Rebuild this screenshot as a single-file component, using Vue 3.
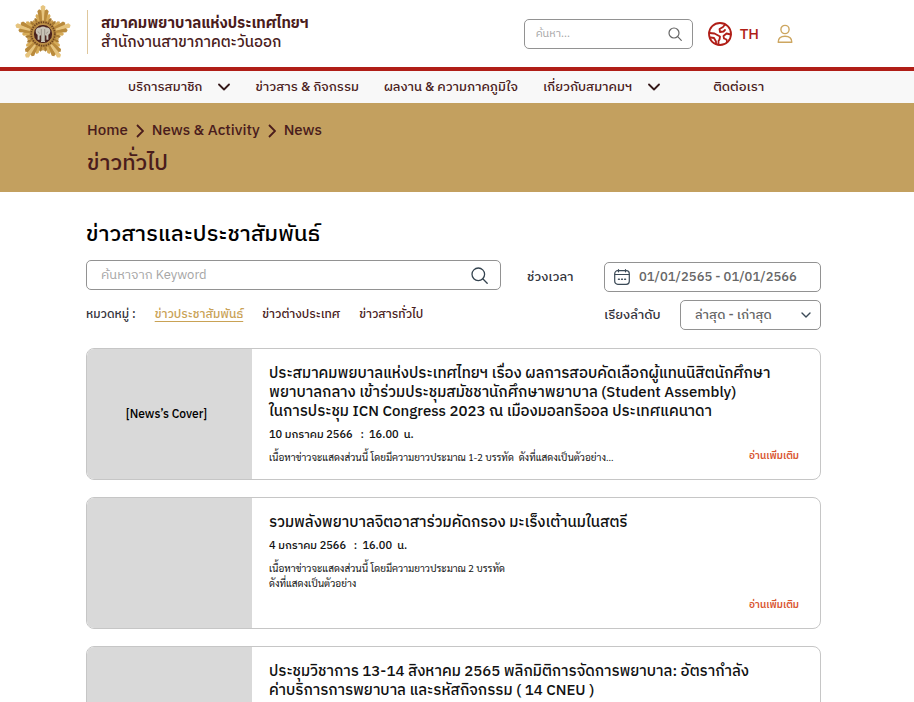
<script setup>
import { ref } from 'vue'

const keyword = ref('')
const siteSearch = ref('')
const dateRange = ref('01/01/2565 - 01/01/2566')
const sort = ref('desc')

const menu = [
  { label: 'บริการสมาชิก', more: true, area: 'member' },
  { label: 'ข่าวสาร & กิจกรรม', area: 'news' },
  { label: 'ผลงาน & ความภาคภูมิใจ', area: 'work' },
  { label: 'เกี่ยวกับสมาคมฯ', more: true, area: 'about' },
  { label: 'ติดต่อเรา', area: 'contact' },
]

const categories = [
  { label: 'ข่าวประชาสัมพันธ์', active: true },
  { label: 'ข่าวต่างประเทศ' },
  { label: 'ข่าวสารทั่วไป' },
]

const news = [
  {
    cover: '[News’s Cover]',
    title: [
      'ประสมาคมพยบาลแห่งประเทศไทยฯ เรื่อง ผลการสอบคัดเลือกผู้แทนนิสิตนักศึกษา',
      'พยาบาลกลาง เข้าร่วมประชุมสมัชชานักศึกษาพยาบาล (Student Assembly)',
      'ในการประชุม ICN Congress 2023 ณ เมืองมอลทริออล ประเทศแคนาดา',
    ],
    date: '10 มกราคม 2566   :  16.00  น.',
    body: ['เนื้อหาข่าวจะแสดงส่วนนี้ โดยมีความยาวประมาณ 1-2 บรรทัด  ดังที่แสดงเป็นตัวอย่าง...'],
    link: '#',
  },
  {
    title: ['รวมพลังพยาบาลจิตอาสาร่วมคัดกรอง มะเร็งเต้านมในสตรี'],
    date: '4 มกราคม 2566   :  16.00  น.',
    body: ['เนื้อหาข่าวจะแสดงส่วนนี้ โดยมีความยาวประมาณ 2 บรรทัด', 'ดังที่แสดงเป็นตัวอย่าง'],
    link: '#',
  },
  {
    title: [
      'ประชุมวิชาการ 13-14 สิงหาคม 2565 พลิกมิติการจัดการพยาบาล: อัตรากำลัง',
      'ค่าบริการการพยาบาล และรหัสกิจกรรม ( 14 CNEU )',
    ],
  },
]

// Rays of the star emblem: long at the five tips, short in the valleys.
const rayLengths = [29, 25, 21, 18, 17, 18, 21, 25]
const rayColors = ['#e6c47e', '#b98a3c', '#d6ab58', '#a87a30', '#c89a4c', '#a87a30', '#d6ab58', '#b98a3c']
const rays = Array.from({ length: 40 }, (_, i) => {
  const a = (i * 9 * Math.PI) / 180
  const w = (5 * Math.PI) / 180
  const r = rayLengths[i % 8]
  const p = (rad, ang) => `${(30 + rad * Math.sin(ang)).toFixed(2)},${(30 - rad * Math.cos(ang)).toFixed(2)}`
  return {
    points: `30,30 ${p(r - 1.5, a - w)} ${p(r, a)} ${p(r - 1.5, a + w)}`,
    fill: rayColors[i % 8],
  }
})
</script>

<template>
  <div class="page">
    <header class="top">
      <a class="brand" href="#">
        <svg class="emblem" viewBox="0 0 60 60" aria-hidden="true">
          <polygon points="30,2 38,19 56.600,21.300 43,34.300 46.500,52.600 30,44 13.500,52.600 17,34.300 3.400,21.300 22,19" fill="#b98a3c" />
          <polygon v-for="(ray, i) in rays" :key="i" :points="ray.points" :fill="ray.fill" />
          <circle cx="30" cy="30" r="13.500" fill="#b98a40" />
          <circle cx="30" cy="30" r="11.800" fill="none" stroke="#6f4620" stroke-width="1.800" stroke-dasharray="1.400 1" />
          <circle cx="30" cy="30" r="9.600" fill="#4a211c" stroke="#c9a055" stroke-width=".8" />
          <path d="M27 23.500c1.500-1.300 4.500-1.300 6 0 2.500-.4 4.300 1.300 4.300 3.600 0 2-.8 3.300-1.900 3.700v5h-2v-4l-1.400-.5V38h-4v-6.700l-1.400.5v4h-2v-5c-1.100-.4-1.900-1.700-1.900-3.700 0-2.300 1.800-4 4.300-3.600z" fill="#c8c2b6" />
          <path d="M28.300 25v12M31.700 25v12M25 27.500l1.500 2M35 27.500l-1.500 2" stroke="#7d7269" stroke-width=".6" fill="none" />
        </svg>
        <span class="brand-text">
          <strong>สมาคมพยาบาลแห่งประเทศไทยฯ</strong>
          <span>สำนักงานสาขาภาคตะวันออก</span>
        </span>
      </a>
      <div class="tools">
        <form class="box site-search" role="search" @submit.prevent>
          <input v-model="siteSearch" type="text" placeholder="ค้นหา..." aria-label="ค้นหา" />
          <button type="submit" aria-label="ค้นหา">
            <svg width="14" height="14" viewBox="0 0 14 14" fill="none" stroke="#666" stroke-width="1.200" stroke-linecap="round">
              <circle cx="6" cy="6" r="5" /><path d="M9.700 9.700L13.300 13.300" />
            </svg>
          </button>
        </form>
        <button class="lang" type="button">
          <svg width="24" height="24" viewBox="0 0 24 24" fill="none" stroke="#b01e17" stroke-width="1.800" stroke-linejoin="round" stroke-linecap="round" aria-hidden="true">
            <circle cx="12" cy="12" r="11" />
            <path d="M1.500 11L6.500 11.500 12 14.500 11.500 17.500 10.500 19v3.500M2.500 15.500L6 16l2 3.500v2.500" />
            <path d="M17 2.500L15 5l-3.500 2 .5 3 3.500-.5 1.500-1.500M22.800 12.500L18.500 11.500 15.500 14l.5 2.500 2.500 1 .5 2.500" />
          </svg>
          <span>TH</span>
        </button>
        <button class="user" type="button" aria-label="บัญชีผู้ใช้">
          <svg width="16" height="20" viewBox="0 0 16 20" fill="none" stroke="#cda660" stroke-width="1.400" stroke-linejoin="round">
            <circle cx="8" cy="5.500" r="4.100" />
            <path d="M1.200 18.300c0-4 2.700-6 6.800-6s6.800 2 6.800 6z" />
          </svg>
        </button>
      </div>
    </header>

    <nav class="menu">
      <a v-for="item in menu" :key="item.label" href="#" :class="item.area">
        <span>{{ item.label }}</span>
        <svg v-if="item.more" width="12" height="8" viewBox="0 0 12 8" fill="none" stroke="#35191a" stroke-width="1.800" stroke-linecap="round" stroke-linejoin="round" aria-hidden="true">
          <path d="M1 1.500l5 5 5-5" />
        </svg>
      </a>
    </nav>

    <section class="band">
      <div class="crumbs">
        <a href="#">Home</a>
        <svg width="8" height="14" viewBox="0 0 8 14" aria-hidden="true"><path d="M1 1l6 6-6 6" /></svg>
        <a href="#">News &amp; Activity</a>
        <svg width="8" height="14" viewBox="0 0 8 14" aria-hidden="true"><path d="M1 1l6 6-6 6" /></svg>
        <a href="#">News</a>
      </div>
      <h1>ข่าวทั่วไป</h1>
    </section>

    <main>
      <h2>ข่าวสารและประชาสัมพันธ์</h2>
      <div class="filters">
        <div class="left">
          <form class="box keyword" @submit.prevent>
            <input v-model="keyword" type="text" placeholder="ค้นหาจาก Keyword" aria-label="ค้นหาจาก Keyword" />
            <button type="submit" aria-label="ค้นหา">
              <svg width="17" height="17" viewBox="0 0 17 17" fill="none" stroke="#34434f" stroke-width="1.300" stroke-linecap="round">
                <circle cx="7.300" cy="7.300" r="6.300" /><path d="M12 12l4.200 4.200" />
              </svg>
            </button>
          </form>
          <div class="cats">
            <span>หมวดหมู่ :</span>
            <a v-for="c in categories" :key="c.label" href="#" :class="{ active: c.active }">{{ c.label }}</a>
          </div>
        </div>
        <div class="right">
          <div class="field">
            <label for="range">ช่วงเวลา</label>
            <div class="box range">
              <svg width="16" height="16" viewBox="0 0 16 16" fill="none" stroke="#3b4a57" stroke-width="1.200" stroke-linecap="round" aria-hidden="true">
                <rect x=".7" y="1.700" width="14.600" height="13.600" rx="3" />
                <path d="M1 5.500h14M4.500.6v2.200M11.500.6v2.200" />
                <path d="M4.500 10.300h.8M7.600 10.300h.8M10.700 10.300h.8" stroke-width="1.500" />
              </svg>
              <input id="range" v-model="dateRange" type="text" />
            </div>
          </div>
          <div class="field sort">
            <label for="sort">เรียงลำดับ</label>
            <div class="box select">
              <select id="sort" v-model="sort">
                <option value="desc">ล่าสุด - เก่าสุด</option>
                <option value="asc">เก่าสุด - ล่าสุด</option>
              </select>
              <svg width="10" height="6" viewBox="0 0 10 6" fill="none" stroke="#3b4a57" stroke-width="1.400" stroke-linecap="round" stroke-linejoin="round" aria-hidden="true">
                <path d="M1 1l4 4 4-4" />
              </svg>
            </div>
          </div>
        </div>
      </div>

      <article v-for="n in news" :key="n.title[0]" class="card">
        <div class="cover">{{ n.cover }}</div>
        <div class="content">
          <h3><span v-for="line in n.title" :key="line">{{ line }}</span></h3>
          <time v-if="n.date">{{ n.date }}</time>
          <p v-if="n.body"><span v-for="line in n.body" :key="line">{{ line }}</span></p>
          <a v-if="n.link" class="more" :href="n.link">อ่านเพิ่มเติม</a>
        </div>
      </article>
    </main>
  </div>
</template>

<style>
body {
  background: #fff;
  overflow-x: hidden;
}
html {
  scrollbar-width: none;
}
</style>

<style scoped>
.page {
  font-family: 'IBM Plex Sans Thai', 'IBM Plex Sans', 'Noto Sans', 'Noto Sans Thai', sans-serif;
  font-size: 13px;
  color: #111;
  height: 100vh;
  overflow: hidden;
}
* {
  box-sizing: border-box;
}
a {
  color: inherit;
  text-decoration: none;
  white-space: nowrap;
}
button {
  border: 0;
  padding: 0;
  background: none;
  font: inherit;
  color: inherit;
  display: flex;
  align-items: center;
  cursor: pointer;
}
input,
select {
  border: 0;
  padding: 0;
  background: none;
  font: inherit;
  color: inherit;
  min-width: 0;
  flex: 1;
  height: 100%;
  outline: 0;
}
input::placeholder {
  color: #a6a6a6;
  opacity: 1;
}
svg {
  flex: none;
  display: block;
}
.box {
  display: flex;
  align-items: center;
  height: 30px;
  border: 1px solid #929292;
  border-radius: 5px;
  background: #fff;
}

.top {
  height: 67px;
  display: flex;
  justify-content: space-between;
  padding: 0 121px 0 13px;
}
.brand {
  display: flex;
  align-items: flex-start;
  padding-top: 4px;
  color: #4a1c1c;
}
.emblem {
  width: 60px;
  height: 60px;
}
.brand-text {
  display: flex;
  flex-direction: column;
  margin: 6px 0 0 14px;
  padding: 4px 0 0 13px;
  height: 44px;
  border-left: 1px solid #dfc79c;
  font-size: 15px;
  line-height: 19px;
}
.brand-text span {
  font-weight: 500;
}
.tools {
  display: flex;
  align-items: center;
  height: 68px;
}
.site-search {
  width: 169px;
  padding: 0 10px 0 11px;
  font-size: 11px;
}
.lang {
  margin-left: 15px;
  gap: 8px;
  color: #b01e17;
  font-size: 15px;
  font-weight: 500;
}
.user {
  margin-left: 18px;
}

.menu {
  height: 36px;
  border-top: 4px solid #b01e17;
  background: #f8f8f8;
  display: flex;
  align-items: center;
  padding-left: 128px;
  gap: 25px;
  color: #4a1c1c;
  font-weight: 500;
}
.menu a {
  display: flex;
  align-items: center;
  gap: 16px;
}
.menu .contact {
  margin-left: 28px;
}

.band {
  background: #c3a05f;
  height: 89px;
  padding: 18px 87px 0;
  color: #4a1c1c;
}
.crumbs {
  display: flex;
  align-items: center;
  gap: 8px;
  font-size: 15px;
  line-height: 20px;
  font-weight: 500;
}
.crumbs svg {
  fill: none;
  stroke: #4a1c1c;
  stroke-width: 1.8;
}
h1 {
  margin: 8px 0 0;
  font-size: 22px;
  line-height: 30px;
  font-weight: 500;
}

main {
  padding: 26px 93px 0 86px;
}
h2 {
  margin: 0;
  font-size: 22px;
  line-height: 34px;
  font-weight: 500;
  color: #000;
}
.filters {
  display: flex;
  gap: 26px;
  margin: 8px 0 18px;
}
.left {
  flex: 1;
  min-width: 0;
}
.keyword {
  padding: 0 12px 0 14px;
}
.cats {
  display: flex;
  gap: 19px;
  margin-top: 15px;
  font-size: 12px;
  line-height: 20px;
  font-weight: 500;
  color: #4a1c1c;
}
.cats span {
  color: #34343c;
  white-space: nowrap;
}
.cats .active {
  color: #c9a255;
  text-decoration: underline;
  text-underline-offset: 3px;
}
.right {
  width: 294px;
  padding-top: 2px;
  display: flex;
  flex-direction: column;
  gap: 8px;
}
.field {
  display: flex;
  align-items: center;
  justify-content: space-between;
  color: #34343c;
  font-weight: 500;
}
.field .box {
  color: #666;
}
.sort {
  padding-left: 77px;
}
.range {
  width: 217px;
  padding: 0 9px;
  gap: 9px;
}
.select {
  width: 141px;
  padding: 0 9px 0 14px;
}
.select select {
  appearance: none;
}

.card {
  display: flex;
  min-height: 132px;
  margin-bottom: 17px;
  border: 1px solid #c6c6c6;
  border-radius: 8px;
  overflow: hidden;
}
.cover {
  width: 165px;
  flex: none;
  background: #d9d9d9;
  display: flex;
  align-items: center;
  justify-content: center;
  padding-right: 6px;
  color: #000;
  font-size: 12px;
  font-weight: 500;
}
.content {
  flex: 1;
  min-width: 0;
  position: relative;
  padding: 15px 17px 0;
}
.content span {
  display: block;
  white-space: pre;
}
h3 {
  margin: 0;
  font-size: 15px;
  line-height: 19px;
  font-weight: 500;
}
time {
  display: block;
  margin-top: 6px;
  font-size: 11px;
  line-height: 16px;
  font-weight: 500;
  white-space: pre;
}
p {
  margin: 6px 0 0;
  font-family: Sarabun, 'TH Sarabun New', 'Noto Sans Thai Looped', Loma, 'IBM Plex Sans Thai', sans-serif;
  font-size: 10px;
  line-height: 15px;
}
.more {
  position: absolute;
  right: 21px;
  bottom: 15px;
  font-size: 10px;
  line-height: 16px;
  font-weight: 600;
  color: #d9552f;
}
</style>
